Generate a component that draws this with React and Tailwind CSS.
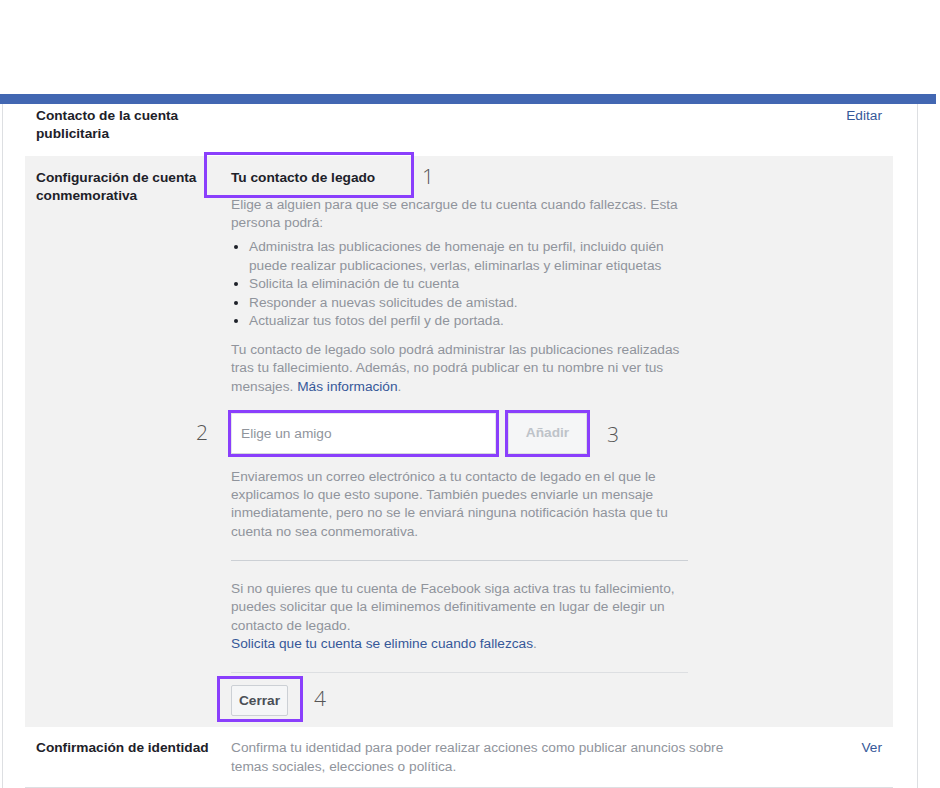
import React from "react";

// numbered callouts drawn on top of the settings panel
function Callout({ className, children }) {
    return (
        <span
            className={
                "absolute font-['Open_Sans',sans-serif] font-light text-[21px] leading-[24px] text-[#555]" +
                " " +
                className
            }
        >
            {children}
        </span>
    );
}

export default function App() {
    return (
        <div className="w-[940px] h-[788px] overflow-hidden bg-white font-['Liberation_Sans',Arial,sans-serif] text-[13.7px] leading-[18.3px] text-[#90949c]">
            <div className="h-[94px]" />
            <div className="h-[10px] w-[936px] bg-[#4267b2]" />

            <div className="ml-[2px] w-[916px] h-[700px] border-x border-[#dddfe2]">
                <div className="ml-[22px] w-[868px]">
                    {/* Ad account contact */}
                    <div className="flex px-[11px] pt-[3px] pb-[12px]">
                        <div className="w-[195px] pr-[10px] font-bold text-[#1d2129]">
                            Contacto de la cuenta publicitaria
                        </div>
                        <div className="flex-1" />
                        <a className="text-[#365899]">Editar</a>
                    </div>

                    {/* Memorialization settings (expanded) */}
                    <div className="flex bg-[#f2f2f2] px-[11px] pt-[13px] pb-[11px]">
                        <div className="w-[195px] pr-[10px] font-bold text-[#1d2129]">
                            Configuración de cuenta conmemorativa
                        </div>
                        <div className="relative w-[457px]">
                            <div className="absolute left-[-27px] top-[-17px] w-[210px] h-[46px] border-[3px] border-[#8a3ffc]" />
                            <Callout className="left-[191px] top-[-5px]">1</Callout>

                            <div className="font-bold text-[#1d2129]">Tu contacto de legado</div>
                            <p className="mt-[9px]">
                                Elige a alguien para que se encargue de tu cuenta cuando fallezcas. Esta
                                persona podrá:
                            </p>
                            <ul className="mt-[6px] pl-[18px] list-disc leading-[18.5px] marker:text-[#1d2129]">
                                <li>
                                    Administra las publicaciones de homenaje en tu perfil, incluido quién
                                    puede realizar publicaciones, verlas, eliminarlas y eliminar etiquetas
                                </li>
                                <li>Solicita la eliminación de tu cuenta</li>
                                <li>Responder a nuevas solicitudes de amistad.</li>
                                <li>Actualizar tus fotos del perfil y de portada.</li>
                            </ul>
                            <p className="mt-[10px]">
                                Tu contacto de legado solo podrá administrar las publicaciones realizadas
                                tras tu fallecimiento. Además, no podrá publicar en tu nombre ni ver tus
                                mensajes. <a className="text-[#365899]">Más información</a>.
                            </p>

                            <div className="relative mt-[17px] flex">
                                <Callout className="left-[-35px] top-[7px]">2</Callout>
                                <input
                                    className="w-[265px] h-[41px] bg-white border border-[#e4e6ea] border-b-[#d4d7dc] pl-[9px] outline-none ring-[3px] ring-[#8a3ffc] placeholder:text-[#90949c]"
                                    placeholder="Elige un amigo"
                                />
                                <button className="ml-[12px] w-[79px] h-[41px] bg-[#f5f6f7] border border-[#dddfe2] font-bold text-[#bec3c9] ring-[3px] ring-[#8a3ffc]">
                                    Añadir
                                </button>
                                <Callout className="left-[376px] top-[9px]">3</Callout>
                            </div>

                            <p className="mt-[14px]">
                                Enviaremos un correo electrónico a tu contacto de legado en el que le
                                explicamos lo que esto supone. También puedes enviarle un mensaje
                                inmediatamente, pero no se le enviará ninguna notificación hasta que tu
                                cuenta no sea conmemorativa.
                            </p>

                            <div className="mt-[19px] h-px bg-[#ccd0d5]" />

                            <p className="mt-[19px]">
                                Si no quieres que tu cuenta de Facebook siga activa tras tu fallecimiento,
                                puedes solicitar que la eliminemos definitivamente en lugar de elegir un
                                contacto de legado.
                                <br />
                                <a className="text-[#365899]">Solicita que tu cuenta se elimine cuando fallezcas</a>.
                            </p>

                            <div className="mt-[19px] h-px bg-[#dddfe2]" />

                            <div className="relative mt-[12px]">
                                <div className="absolute left-[-14px] top-[-9px] w-[86px] h-[46px] border-[3px] border-[#8a3ffc]" />
                                <button className="w-[57px] h-[31px] bg-[#f5f6f7] border border-[#ccd0d5] rounded-[2px] font-bold text-[#4b4f56]">
                                    Cerrar
                                </button>
                                <Callout className="left-[83px] top-[1px]">4</Callout>
                            </div>
                        </div>
                    </div>

                    {/* Identity confirmation */}
                    <div className="flex px-[11px] pt-[12px] pb-[11px] border-b border-[#dddfe2]">
                        <div className="w-[195px] pr-[10px] font-bold text-[#1d2129]">
                            Confirmación de identidad
                        </div>
                        <div className="w-[510px]">
                            Confirma tu identidad para poder realizar acciones como publicar anuncios sobre
                            temas sociales, elecciones o política.
                        </div>
                        <div className="flex-1" />
                        <a className="text-[#365899]">Ver</a>
                    </div>
                </div>
            </div>
        </div>
    );
}
